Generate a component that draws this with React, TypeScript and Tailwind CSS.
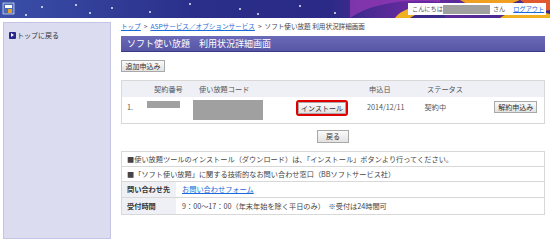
import React from "react";

const font = { fontFamily: '"Noto Sans CJK JP", "Noto Sans", sans-serif' };

function Banner() {
  return (
    <div className="relative h-[18px] w-full overflow-hidden">
      <svg className="absolute inset-0" width="550" height="18" viewBox="0 0 550 18">
        <defs>
          <linearGradient id="bg" x1="0" x2="1" y1="0" y2="0">
            <stop offset="0" stopColor="#3a4fa8" />
            <stop offset="0.35" stopColor="#2a2f8a" />
            <stop offset="0.6" stopColor="#2b2a86" />
            <stop offset="0.75" stopColor="#6a2aa0" />
            <stop offset="1" stopColor="#3a2a8a" />
          </linearGradient>
        </defs>
        <rect width="550" height="18" fill="url(#bg)" />
        {[
          [26, 15], [42, 7], [76, 5], [90, 13], [112, 8], [150, 12], [190, 4], [240, 9], [258, 14], [300, 6], [335, 13],
        ].map(([x, y], i) => (
          <circle key={i} cx={x} cy={y} r="1" fill="#ffffff" opacity="0.9" />
        ))}
        <path d="M350 18 C370 4 405 -2 440 2 L440 0 L350 0 Z" fill="#9a3ab8" opacity="0.7" />
        <path d="M395 18 C402 8 420 4 440 6 L440 18 Z" fill="#f0b020" />
        <path d="M410 18 C418 12 430 10 445 12 L445 18 Z" fill="#3a2a8a" />
        <path d="M460 0 C470 6 480 10 500 8 L520 0 Z" fill="#f0a020" />
        <path d="M520 0 C530 8 540 12 550 10 L550 0 Z" fill="#e05a30" />
        <path d="M500 18 C510 10 530 8 550 14 L550 18 Z" fill="#f0b020" />
        <rect x="3" y="3" width="11" height="11" fill="#4a6ab8" stroke="#ffffff" strokeWidth="0.6" />
        <rect x="5" y="5" width="7" height="3" fill="#ffffff" />
        <rect x="8" y="9" width="4" height="4" fill="#e0a030" />
      </svg>
      <div className="absolute left-[408px] top-[3px] flex h-[12px] w-[138px] items-center whitespace-nowrap bg-white pl-[4px] text-[6.2px] text-[#555]">
        <span>こんにちは</span>
        <span className="inline-block h-[9px] w-[47px] shrink-0 bg-[#a0a0a0]" />
        <span className="ml-[3px]">さん</span>
        <span className="ml-[8px] text-[#1a6ad8] underline">ログアウト</span>
      </div>
    </div>
  );
}

function Btn({ children, className = "" }: { children: React.ReactNode; className?: string }) {
  return (
    <span
      className={
        "inline-flex h-[12px] shrink-0 items-center justify-center whitespace-nowrap border border-[#a8a8a8] bg-gradient-to-b from-[#fafafa] to-[#e2e2e2] text-[7px] leading-none text-[#333] " +
        className
      }
    >
      {children}
    </span>
  );
}

export default function App() {
  return (
    <div className="h-[244px] w-[550px] overflow-hidden whitespace-nowrap bg-white text-[#444]" style={font}>
      <Banner />
      <div className="flex gap-[10px] pl-[3px] pt-[4px]">
        {/* サイドバー */}
        <div className="h-[217px] w-[108px] shrink-0 border border-[#c4c4e4] bg-[#dcdcf0] px-[5px] pt-[7px]">
          <div className="flex items-center gap-[1px] text-[7px] text-[#333]">
            <span className="flex h-[7px] w-[7px] items-center justify-center rounded-[1px] bg-[#28288a]">
              <span className="h-0 w-0 border-y-[2px] border-l-[3px] border-y-transparent border-l-white" />
            </span>
            <span>トップに戻る</span>
          </div>
        </div>

        {/* メイン */}
        <div className="w-[424px] shrink-0">
          <div className="flex h-[10px] items-center text-[6.6px] text-[#444]">
            <span className="text-[#1a6ad8] underline">トップ</span>
            <span className="mx-[3px]">&gt;</span>
            <span className="text-[#1a6ad8] underline">ASPサービス／オプションサービス</span>
            <span className="mx-[3px]">&gt;</span>
            <span>ソフト使い放題 利用状況詳細画面</span>
          </div>
          <div className="mt-[4px] flex h-[16px] items-center border-b border-[#3a3a88] bg-gradient-to-b from-[#6a6ab8] to-[#5656a4] pl-[6px] text-[9px] text-white">
            ソフト使い放題　利用状況詳細画面
          </div>

          <div className="mt-[8px] flex">
            <Btn className="w-[44px]">追加申込み</Btn>
          </div>

          {/* 契約一覧 */}
          <div className="mt-[8px] border border-[#d8d8d8]">
            <div className="flex h-[16px] items-center bg-[#eef0f6] text-[7.2px] text-[#555]">
              <span className="w-[32px]" />
              <span className="w-[45px]">契約番号</span>
              <span className="w-[170px]">使い放題コード</span>
              <span className="w-[58px]">申込日</span>
              <span>ステータス</span>
            </div>
            <div className="flex h-[26px] items-start pt-[3px] text-[7.2px] text-[#555]">
              <span className="w-[25px] shrink-0 pl-[5px] pt-[2px]">1.</span>
              <span className="mt-[1px] h-[7px] w-[33px] shrink-0 bg-[#a0a0a0]" />
              <span className="ml-[13px] h-[20px] w-[70px] shrink-0 bg-[#a0a0a0]" />
              <span className="ml-[33px] flex shrink-0 rounded-[3px] border-2 border-[#e00000]">
                <Btn className="h-[9px] w-[48px] border-[#999]">インストール</Btn>
              </span>
              <span className="ml-[19px] pt-[2px]">2014/12/11</span>
              <span className="ml-[20px] pt-[2px]">契約中</span>
              <Btn className="ml-[48px] mt-[1px] w-[43px]">解約申込み</Btn>
            </div>
          </div>

          <div className="mt-[6px] flex justify-center">
            <Btn className="h-[13px] w-[32px]">戻る</Btn>
          </div>

          {/* 案内 */}
          <div className="mt-[8px] border border-[#d8d8d8] text-[7.2px] text-[#444]">
            <div className="flex h-[15px] items-center border-b border-[#d8d8d8] pl-[5px]">
              ■使い放題ツールのインストール（ダウンロード）は、「インストール」ボタンより行ってください。
            </div>
            <div className="flex h-[15px] items-center border-b border-[#d8d8d8] pl-[5px]">
              ■「ソフト使い放題」に関する技術的なお問い合わせ窓口（BBソフトサービス社）
            </div>
            <div className="flex h-[16px] items-stretch border-b border-[#d8d8d8]">
              <span className="flex w-[54px] items-center bg-[#eef0f6] pl-[5px] font-bold text-[#333]">問い合わせ先</span>
              <span className="flex items-center pl-[6px] text-[#1a6ad8] underline">お問い合わせフォーム</span>
            </div>
            <div className="flex h-[16px] items-stretch">
              <span className="flex w-[54px] items-center bg-[#eef0f6] pl-[5px] font-bold text-[#333]">受付時間</span>
              <span className="flex items-center pl-[6px]">
                9：00～17：00（年末年始を除く平日のみ）　※受付は24時間可
              </span>
            </div>
          </div>
        </div>
      </div>
    </div>
  );
}
